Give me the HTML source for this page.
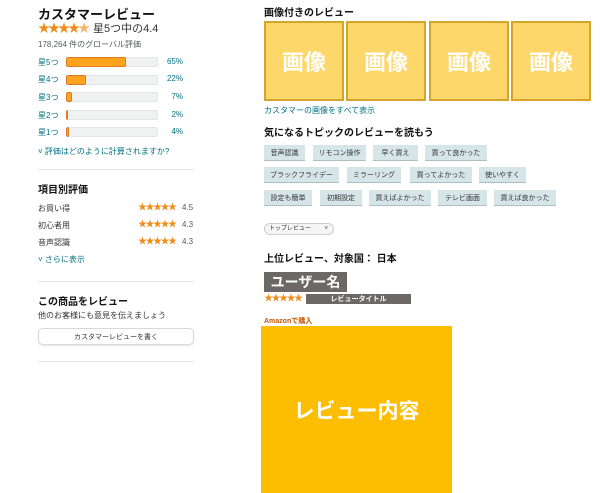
<!DOCTYPE html>
<html><head><meta charset="utf-8"><style>
*{margin:0;padding:0;box-sizing:border-box}
body{width:600px;height:493px;overflow:hidden;background:#fff;position:relative;font-family:"Liberation Sans","Noto Sans CJK JP",sans-serif;color:#111}
.a{position:absolute;white-space:nowrap}
.lbl{font-size:8px;color:#007185}
.bar{position:absolute;left:66px;width:92px;height:10px;background:#f0f2f2;border-radius:2px;overflow:hidden;box-shadow:inset 0 0 0 1px #e3e6e6}
.bar i{display:block;height:100%;background:#ffa41c;border:1px solid #de7921;border-radius:2px}
.pct{font-size:8px;color:#007185;text-align:right;width:30px;left:153px}
.st{color:#f08c1a;font-size:9px;letter-spacing:-1.5px;line-height:1}
.hr{position:absolute;left:38px;width:156px;height:1px;background:#e7e7e7}
.img{position:absolute;top:21px;width:80px;height:80px;background:#fdd769;border:2px solid #d4a52a;color:#fff;font-size:22px;font-weight:bold;display:flex;align-items:center;justify-content:center}
.tag{position:absolute;height:16px;background:#d6e5e8;border-bottom:1px solid #aebfc3;font-size:7px;color:#333;display:flex;align-items:center;justify-content:center}
</style></head><body>
<div class="a" style="left:38px;top:4px;font-size:13px;font-weight:bold">カスタマーレビュー</div>
<div class="a st" style="left:38px;top:22px;font-size:12px;letter-spacing:-2px">★★★★<span style="color:#f5b56a">★</span></div>
<div class="a" style="left:93px;top:20px;font-size:11px;color:#333">星5つ中の4.4</div>
<div class="a" style="left:38px;top:39px;font-size:8px;color:#565959">178,264 件のグローバル評価</div>

<div class="a lbl" style="left:38px;top:57px">星5つ</div><div class="bar" style="top:57px"><i style="width:65%"></i></div><div class="a pct" style="top:57px">65%</div>
<div class="a lbl" style="left:38px;top:74px">星4つ</div><div class="bar" style="top:75px"><i style="width:22%"></i></div><div class="a pct" style="top:74px">22%</div>
<div class="a lbl" style="left:38px;top:92px">星3つ</div><div class="bar" style="top:92px"><i style="width:7%"></i></div><div class="a pct" style="top:92px">7%</div>
<div class="a lbl" style="left:38px;top:110px">星2つ</div><div class="bar" style="top:110px"><i style="width:2%"></i></div><div class="a pct" style="top:110px">2%</div>
<div class="a lbl" style="left:38px;top:127px">星1つ</div><div class="bar" style="top:127px"><i style="width:3%"></i></div><div class="a pct" style="top:127px">4%</div>
<div class="a" style="left:38px;top:146px;font-size:8px;color:#007185">˅ 評価はどのように計算されますか?</div>
<div class="hr" style="top:169px"></div>
<div class="a" style="left:38px;top:181px;font-size:10px;font-weight:bold">項目別評価</div>
<div class="a" style="left:38px;top:203px;font-size:8px;color:#333">お買い得</div><div class="a st" style="left:138px;top:203px">★★★★★</div><div class="a" style="left:182px;top:203px;font-size:8px;color:#565959">4.5</div>
<div class="a" style="left:38px;top:220px;font-size:8px;color:#333">初心者用</div><div class="a st" style="left:138px;top:220px">★★★★★</div><div class="a" style="left:182px;top:220px;font-size:8px;color:#565959">4.3</div>
<div class="a" style="left:38px;top:237px;font-size:8px;color:#333">音声認識</div><div class="a st" style="left:138px;top:237px">★★★★★</div><div class="a" style="left:182px;top:237px;font-size:8px;color:#565959">4.3</div>
<div class="a" style="left:38px;top:254px;font-size:8px;color:#007185">˅ さらに表示</div>
<div class="hr" style="top:281px"></div>
<div class="a" style="left:38px;top:293px;font-size:10px;font-weight:bold">この商品をレビュー</div>
<div class="a" style="left:38px;top:310px;font-size:8px;color:#333">他のお客様にも意見を伝えましょう</div>
<div class="a" style="left:38px;top:328px;width:156px;height:17px;border:1px solid #d5d9d9;border-radius:5px;box-shadow:0 1px 2px rgba(0,0,0,.1);font-size:7px;display:flex;align-items:center;justify-content:center;color:#333">カスタマーレビューを書く</div>
<div class="hr" style="top:361px"></div>

<div class="a" style="left:264px;top:4px;font-size:10px;font-weight:bold">画像付きのレビュー</div>
<div class="img" style="left:264px">画像</div>
<div class="img" style="left:346px">画像</div>
<div class="img" style="left:429px">画像</div>
<div class="img" style="left:511px">画像</div>
<div class="a" style="left:264px;top:105px;font-size:8px;color:#007185">カスタマーの画像をすべて表示</div>
<div class="a" style="left:264px;top:124px;font-size:10px;font-weight:bold">気になるトピックのレビューを読もう</div>
<div class="tag" style="left:264px;top:145px;width:41px">音声認識</div>
<div class="tag" style="left:313px;top:145px;width:53px">リモコン操作</div>
<div class="tag" style="left:373px;top:145px;width:45px">早く買え</div>
<div class="tag" style="left:425px;top:145px;width:62px">買って良かった</div>
<div class="tag" style="left:264px;top:167px;width:75px">ブラックフライデー</div>
<div class="tag" style="left:347px;top:167px;width:54px">ミラーリング</div>
<div class="tag" style="left:410px;top:167px;width:62px">買ってよかった</div>
<div class="tag" style="left:479px;top:167px;width:47px">使いやすく</div>
<div class="tag" style="left:264px;top:190px;width:48px">設定も簡単</div>
<div class="tag" style="left:320px;top:190px;width:42px">初期設定</div>
<div class="tag" style="left:369px;top:190px;width:62px">買えばよかった</div>
<div class="tag" style="left:438px;top:190px;width:49px">テレビ画面</div>
<div class="tag" style="left:494px;top:190px;width:62px">買えば良かった</div>
<div class="a" style="left:264px;top:223px;width:70px;height:12px;border:1px solid #ccc;border-radius:6px;background:#f5f5f5;font-size:6px;padding-left:4px;line-height:10px;color:#333">トップレビュー<span style="position:absolute;right:5px">˅</span></div>
<div class="a" style="left:264px;top:250px;font-size:10px;font-weight:bold">上位レビュー、対象国： 日本</div>
<div class="a" style="left:264px;top:272px;width:83px;height:20px;background:#6d6868;color:#fff;font-size:14px;font-weight:bold;display:flex;align-items:center;justify-content:center">ユーザー名</div>
<div class="a st" style="left:264px;top:294px;font-size:9px">★★★★★</div>
<div class="a" style="left:306px;top:294px;width:105px;height:10px;background:#6d6868;color:#fff;font-size:7px;font-weight:bold;display:flex;align-items:center;justify-content:center">レビュータイトル</div>
<div class="a" style="left:264px;top:316px;font-size:7px;font-weight:bold;color:#c45500">Amazonで購入</div>
<div class="a" style="left:261px;top:326px;width:191px;height:167px;background:#fdbd00;color:#fff;font-size:21px;font-weight:bold;display:flex;align-items:center;justify-content:center">レビュー内容</div>
</body></html>
